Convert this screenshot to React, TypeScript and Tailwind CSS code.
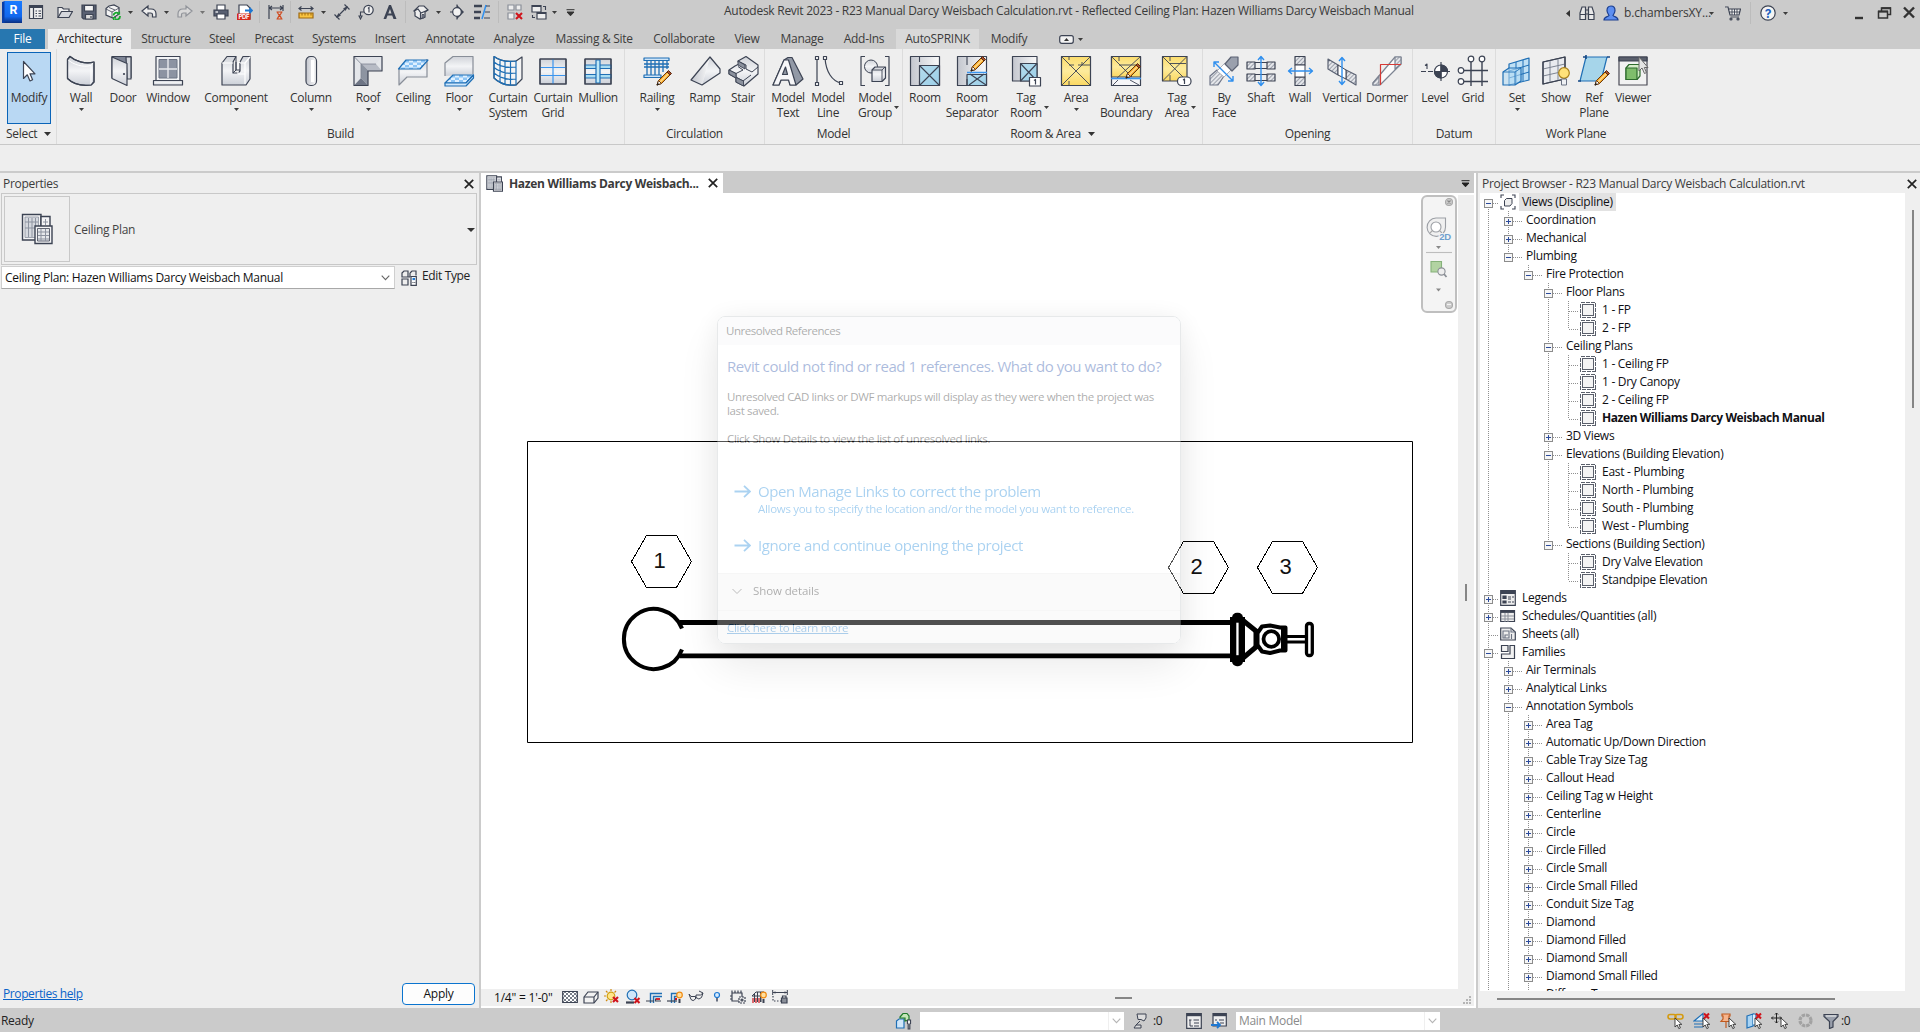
import React from "react";

type Kids = { children?: React.ReactNode };

/* ---------- drawing helpers ---------- */

const D = "#3c4353";
const B = "#1f6fb5";

function Ic({ s = 16, children }: Kids & { s?: number }) {
  return (
    <svg width={s} height={s} viewBox={`0 0 ${s} ${s}`} className="shrink-0" fill="none" stroke={D} strokeWidth="1.2">
      {children}
    </svg>
  );
}

const Big = ({ children }: Kids) => (
  <svg width="32" height="32" viewBox="0 0 32 32" className="shrink-0" fill="url(#metal)" stroke={D} strokeWidth="1.2" strokeLinejoin="round">
    {children}
  </svg>
);

function Defs() {
  return (
    <svg width="0" height="0" className="absolute">
      <defs>
        <linearGradient id="metal" x1="0" y1="0" x2="0" y2="1">
          <stop offset="0" stopColor="#d0d3d9" />
          <stop offset="0.5" stopColor="#f3f4f6" />
          <stop offset="1" stopColor="#ccd0d8" />
        </linearGradient>
        <linearGradient id="side" x1="0" y1="0" x2="1" y2="0">
          <stop offset="0" stopColor="#c3c6ce" />
          <stop offset="1" stopColor="#fafafa" />
        </linearGradient>
        <linearGradient id="yellow" x1="0" y1="0" x2="0" y2="1">
          <stop offset="0" stopColor="#fbdc6c" />
          <stop offset="0.5" stopColor="#fdeb9c" />
          <stop offset="1" stopColor="#fbd862" />
        </linearGradient>
        <linearGradient id="logo" x1="0" y1="0" x2="0" y2="1">
          <stop offset="0" stopColor="#1a7bff" />
          <stop offset="0.7" stopColor="#1268ee" />
          <stop offset="1" stopColor="#0a2f80" />
        </linearGradient>
        <linearGradient id="sky" x1="0" y1="0" x2="1" y2="1">
          <stop offset="0" stopColor="#b4dcee" />
          <stop offset="1" stopColor="#9ccfe8" />
        </linearGradient>
        <pattern id="hatch" width="3" height="3" patternUnits="userSpaceOnUse" patternTransform="rotate(45)">
          <rect width="3" height="3" fill="#e4e6ea" stroke="none" />
          <path d="M0 0V3" stroke="#8a909c" strokeWidth="1.6" />
        </pattern>
        <pattern id="tiles" width="8" height="5" patternUnits="userSpaceOnUse">
          <rect width="8" height="5" fill="#dff0ff" stroke="none" />
          <rect width="4" height="2.5" fill="#8cc4f5" stroke="none" />
          <rect x="4" y="2.5" width="4" height="2.5" fill="#8cc4f5" stroke="none" />
        </pattern>
        <pattern id="dots" width="4" height="4" patternUnits="userSpaceOnUse">
          <rect width="4" height="4" fill="#fff" stroke="none" />
          <rect width="2" height="2" fill="#777d88" stroke="none" />
          <rect x="2" y="2" width="2" height="2" fill="#777d88" stroke="none" />
        </pattern>
      </defs>
    </svg>
  );
}

const Pencil = ({ x = 0, y = 0 }: { x?: number; y?: number }) => (
  <g transform={`translate(${x} ${y})`} strokeWidth="1">
    <path d="M1 15L2.500 10.500L11 2L14 5L5.500 13.500Z" fill="#f5a623" stroke="#6b3a10" />
    <path d="M4 12L12.500 3.500" stroke="#ffd98a" strokeWidth="1.600" />
    <path d="M11 2L12.500 0.500L15.500 3.500L14 5Z" fill="#a8502a" stroke="#5a2810" />
    <path d="M1 15L2.500 10.500L5.500 13.500Z" fill="#fff" stroke="#6b3a10" />
    <path d="M0.600 15.400L1.600 12.600L3.400 14.400Z" fill="#222" stroke="none" />
  </g>
);

const Cursor = ({ x = 0, y = 0 }: { x?: number; y?: number }) => (
  <path transform={`translate(${x} ${y})`} d="M0 0V9L2.200 7L3.800 10.600L5.400 9.900L3.900 6.400H6.800Z" fill="#fff" stroke="#333" strokeWidth="0.900" />
);

const RedX = ({ x = 0, y = 0, s = 6 }: { x?: number; y?: number; s?: number }) => (
  <path d={`M${x} ${y}l${s} ${s}M${x + s} ${y}l${-s} ${s}`} stroke="#d0141c" strokeWidth="2.1" />
);

function Caret({ className = "" }: { className?: string }) {
  return (
    <svg width="5" height="3" viewBox="0 0 5 3" className={`shrink-0 ${className}`}>
      <path d="M0 0H5L2.500 3Z" fill="#3c3c3c" />
    </svg>
  );
}

/* ---------- ribbon icons ---------- */

const I = {
  cursor: (
    <Big>
      <path d="M10.500 5.500V22.500L14.300 18.800L17 25L19.600 23.800L17 17.800H22Z" fill="#fff" strokeWidth="1.200" />
    </Big>
  ),
  wall: (
    <Big>
      <path d="M2.500 4.500L5 1.500C10 6 20 9.500 29 7V27L26 30C17 31 8 29 2.500 23.500Z" />
      <path d="M2.500 4.500C9 10 18 12.500 26 10.500V30M26 10.500L29 7" stroke="#fff" strokeWidth="1" fill="none" />
      <path d="M2.500 4.500L5 1.500C10 6 20 9.500 29 7V27L26 30C17 31 8 29 2.500 23.500Z" fill="none" />
    </Big>
  ),
  door: (
    <Big>
      <path d="M5 23V1.500H24V23" fill="#7e8595" />
      <path d="M19 2H24V24H20Z" fill="#d5d8de" />
      <path d="M5 2L20 8.500V30.500L5 23.500Z" />
      <circle cx="17" cy="19" r="1.100" fill={D} stroke="none" />
    </Big>
  ),
  window: (
    <Big>
      <path d="M4 1.500H28V26H4Z" fill="#f3f4f6" />
      <path d="M7 4.500H25V23H7Z" fill="#8c93a2" stroke="#6d7484" strokeWidth="1" />
      <path d="M16 4V23M7 14H25" stroke="#e8eaee" strokeWidth="1.400" />
      <path d="M1.500 25.500H30.500V30H1.500Z" />
    </Big>
  ),
  component: (
    <Big>
      <path d="M2 8L7 1.500H16L13 8V18H17V30H2Z" stroke="none" />
      <path d="M2 30V8L7 1.500H16L13 7V18H18L20 16V7L23 1.500H30V24L26 30Z" />
      <path d="M2 8H13M18 19V8L20 7M18 19H25M25 8V29M20 8H25L30 2" stroke="#fff" strokeWidth="1.200" fill="none" />
      <path d="M16 1.500V15M13 18L16 15H20M16 15V7" fill="none" strokeWidth="1" />
    </Big>
  ),
  column: (
    <Big>
      <rect x="11" y="1.500" width="10.500" height="29" rx="4.500" fill="url(#side)" />
      <path d="M17.500 5V27" stroke="#fff" strokeWidth="3" />
    </Big>
  ),
  roof: (
    <Big>
      <path d="M2 1.500H30V16H16V30.500H2Z" fill="#e4e6ea" stroke="none" />
      <path d="M2 1.500L9 9H24L30 1.500Z" fill="#dfe1e6" stroke="none" />
      <path d="M9 9L16 16V30.500L9 23Z" fill="#8d94a1" stroke="none" />
      <path d="M9 9L16 16H30L24 9Z" fill="#b7bbc5" stroke="none" />
      <path d="M2 30.500L9 23L16 30.500Z" fill="#6e7585" stroke="none" />
      <path d="M2 1.500L16 16M9 9H24M9 9V23" fill="none" stroke="#7d8492" strokeWidth="0.800" />
      <path d="M2 1.500H30V16H16V30.500H2Z" fill="none" />
    </Big>
  ),
  ceiling: (
    <Big>
      <path d="M2 14V30L10 22H30V4" stroke="#888e98" />
      <path d="M9 5H31L23 14H1.500Z" fill="url(#tiles)" stroke={B} />
    </Big>
  ),
  floor: (
    <Big>
      <path d="M2 21V8L10 1.500H30V19" stroke="#888e98" />
      <path d="M10 20H30.500L23 28H2Z" fill="url(#tiles)" stroke={B} />
      <path d="M2 28H23L30.500 20V23L23 31H2Z" fill="#cfe7fb" stroke={B} />
    </Big>
  ),
  curtainSystem: (
    <Big>
      <path d="M2 1.500C8 6 16 7 24 6L30 2V24L24 30C15 31 8 29 2 23Z" fill="#f5f5f5" />
      <path d="M2 1.500C8 6 16 7 24 6V30C15 31 8 29 2 23ZM8 4.500V28M13 6V30M18.500 6.500V30M2 7C8 12 16 13 24 12M2 12.500C8 17.500 16 19 24 18M2 18C8 23 16 25 24 24" fill="none" stroke={B} />
    </Big>
  ),
  curtainGrid: (
    <Big>
      <path d="M3 4H29V29H3Z" />
      <path d="M16 4V29M3 12.500H29M3 20.500H29" stroke="#3b95ee" />
      <path d="M3 4H29V29H3Z" fill="none" />
    </Big>
  ),
  mullion: (
    <Big>
      <path d="M3 4H29V29H3Z" />
      <path d="M3 10H29V13.500H3ZM3 19.500H29V23H3Z" fill="#a9dcf2" stroke={B} />
      <path d="M14 5H18V28H14Z" fill="#bfe8f7" stroke={B} />
      <path d="M3 4H29V29H3Z" fill="none" />
    </Big>
  ),
  railing: (
    <Big>
      <path d="M3 3H28V5.500H3ZM3 20H20V22.500H3Z" fill="#cfe5f8" stroke={B} />
      <path d="M6 6V20M10 6V20M14 6V20M18 6V20M22 6V17M26 6V14M3 9H28M3 12H28" fill="none" stroke={B} strokeWidth="1.300" />
      <Pencil x={15} y={15} />
    </Big>
  ),
  ramp: (
    <Big>
      <path d="M2 25L21 2L31 14V18L13 30Z" fill="#fafafa" stroke="none" />
      <path d="M2 25L21 2L13 30Z" fill="url(#side)" stroke="none" />
      <path d="M21 2L31 14V18L13 30Z" stroke="none" />
      <path d="M2 25L21 2L31 14V18L13 30Z" fill="none" />
    </Big>
  ),
  stair: (
    <Big>
      <path d="M2 15L8 11L12 9L11 6L19 1.500L31 10V19L17 31L9 27V23L2 19Z" />
      <path d="M2 15L9 18.500L16 15L11 11.500M9 18.500V22L16 26L24 20M11 6L19 10V14L25 17L31 12" fill="none" strokeWidth="1" />
      <path d="M2 15L9 18.500V22.500L16.500 26V31L9 27V23L2 19ZM11 6L18 10V14L11 10Z" fill="#8b919d" strokeWidth="0.900" />
    </Big>
  ),
  modelText: (
    <Big>
      <path d="M1 30L12 5L16 2.500H20L31 24L24 30H18L17 25H9L7 30Z" fill="#9299a6" />
      <path d="M1 30L12 5H16.500L24 30H18L16.500 25H9L7 30Z" fill="#f6f6f8" />
      <path d="M10.500 19.500L13.500 12L15.500 19.500Z" fill="#8e95a2" />
    </Big>
  ),
  modelLine: (
    <Big>
      <path d="M5 3V29M13 3C14 17 20 26 29 28" fill="none" />
      <path d="M3.500 1.500H6.500V4.500H3.500ZM3.500 27.500H6.500V30.500H3.500ZM11.500 1.500H14.500V4.500H11.500ZM27.500 26.500H30.500V29.500H27.500Z" fill="#fff" strokeWidth="1.200" />
    </Big>
  ),
  modelGroup: (
    <Big>
      <path d="M6 1.500H2V30.500H6M26 1.500H30V30.500H26" fill="none" />
      <circle cx="12" cy="11.500" r="6.500" strokeWidth="1" />
      <path d="M13 15L16 12H26.500V23L23 26.500H13Z" />
      <path d="M13 15H23V26M23 15L26 12" fill="none" strokeWidth="0.900" />
    </Big>
  ),
  room: (
    <Big>
      <path d="M1.500 1.500H30.500V30.500H1.500Z" fill="url(#side)" />
      <path d="M10.500 10.500H30.500V30.500H10.500Z" fill="url(#sky)" />
      <path d="M10.500 10.500L30.500 30.500M30.500 10.500L10.500 30.500M10.500 2V7M10.500 26V30" fill="none" strokeWidth="1.100" />
    </Big>
  ),
  roomSep: (
    <Big>
      <path d="M1.500 1.500H30.500V30.500H1.500Z" fill="url(#side)" />
      <path d="M11 19.500H30.500V30.500H11Z" fill="url(#sky)" />
      <path d="M11 2V10M11 24V30M13 30L28 19M14 19L30 30" fill="none" strokeWidth="1.100" />
      <path d="M11 17.500H31" stroke="#3b95ee" strokeWidth="1.500" />
      <Pencil x={14} y={1} />
    </Big>
  ),
  tagRoom: (
    <Big>
      <path d="M2.500 1.500H27V26H2.500Z" fill="url(#side)" />
      <path d="M10.500 8.500H27V26H10.500Z" fill="url(#sky)" />
      <path d="M10.500 8.500L27 26M27 8.500L10.500 26" strokeWidth="1.100" />
      <path d="M19.500 22.500H30.500V31H19.500Z" fill="#fff" />
      <path d="M24 25.500L25.500 24.500V29.500" fill="none" />
    </Big>
  ),
  area: (
    <Big>
      <path d="M1.500 1.500H30.500V30.500H1.500Z" fill="url(#yellow)" />
      <path d="M1.500 1.500L30.500 30.500M30.500 1.500L1.500 30.500M9 2V5M9 10H14M18 10H30M9 26V30M22 10V7" fill="none" strokeWidth="0.900" />
    </Big>
  ),
  areaBoundary: (
    <Big>
      <path d="M1.500 1.500H30.500V30.500H1.500Z" fill="#f6f6f8" />
      <path d="M1.500 1.500H30.500V22H1.500Z" fill="url(#yellow)" />
      <path d="M1.500 1.500L22 22M30.500 1.500L6 24M9 2V6M9 10H28M3 30L8 25M20 25L29 30" fill="none" strokeWidth="0.900" />
      <path d="M1 23.500H31" stroke="#3b95ee" strokeWidth="1.600" />
      <Pencil x={15} y={8} />
    </Big>
  ),
  tagArea: (
    <Big>
      <path d="M1.500 1.500H26V26H1.500Z" fill="url(#yellow)" />
      <path d="M1.500 1.500L26 26M26 1.500L1.500 26M9 2V6M9 8.500H25M9 20V26" fill="none" strokeWidth="0.900" />
      <rect x="16.500" y="22" width="13.500" height="8.500" rx="4" fill="#fff" />
      <path d="M22 25L23.500 24V29" fill="none" />
    </Big>
  ),
  byFace: (
    <Big>
      <path d="M2 21L9 15L16 21L10 30H2Z" fill="url(#hatch)" stroke="#71788a" />
      <path d="M9 16L17 8L24 14L16 22Z" fill="#fff" strokeWidth="0.800" stroke="#9aa0ab" />
      <path d="M17 9L23 2H30V10L24 16Z" fill="#9aa0ad" stroke="#5c6374" />
      <path d="M6 7L25 26M6 12V7H11M25 21V26H20" fill="none" stroke="#2f8fee" strokeWidth="1.400" />
    </Big>
  ),
  shaft: (
    <Big>
      <path d="M2 7H10V14H2ZM22 7H30V14H22ZM2 19H10V26H2ZM22 19H30V26H22Z" fill="url(#hatch)" strokeWidth="1.200" />
      <path d="M10 7.500H22M10 13.500H22M10 19.500H22M10 25.500H22" strokeWidth="1" />
      <path d="M16 2V30M13 5L16 1.500L19 5M13 27L16 30.500L19 27" fill="none" stroke="#2f8fee" strokeWidth="1.400" />
    </Big>
  ),
  wallOpen: (
    <Big>
      <path d="M11 1.500H21V10H11ZM11 22H21V30.500H11Z" fill="url(#hatch)" />
      <path d="M11 10H21V22H11Z" fill="#fff" strokeWidth="1" />
      <path d="M5 16H28M8 13L4.500 16L8 19M25 13L28.500 16L25 19" fill="none" stroke="#2f8fee" strokeWidth="1.400" />
    </Big>
  ),
  vertical: (
    <Big>
      <path d="M2 4L12 10V20L2 14ZM20 15L30 20V30L20 24Z" fill="url(#hatch)" stroke="#5c6374" />
      <path d="M12 10L20 15V24L12 20Z" fill="#fff" strokeWidth="1" />
      <path d="M16 3V29M13 6L16 2.500L19 6M13 26L16 29.500L19 26" fill="none" stroke="#2f8fee" strokeWidth="1.400" />
    </Big>
  ),
  dormer: (
    <Big>
      <path d="M2 28L24 2H30V9L9 30H2Z" fill="#fafafa" stroke="#7d8492" />
      <path d="M2 28L8 21V30H2ZM24 2H30V9L24 14Z" fill="url(#hatch)" stroke="#7d8492" />
      <path d="M9.500 30V9.500H30" fill="none" stroke="#d63a35" />
    </Big>
  ),
  level: (
    <Big>
      <path d="M2 16.500H7M9 16.500H14M29 16.500H31" />
      <path d="M6 10.500L8 9V14" fill="none" strokeWidth="1.100" />
      <circle cx="22" cy="16.500" r="6.500" fill="#fff" />
      <path d="M22 10A6.500 6.500 0 0 1 28.500 16.500H22ZM22 23A6.500 6.500 0 0 1 15.500 16.500H22Z" fill={D} />
      <path d="M22 7V26" />
    </Big>
  ),
  grid: (
    <Big>
      <path d="M14 7V31M25 7V31M7 15.500H31M7 26.500H31" strokeWidth="1.400" />
      <circle cx="14" cy="4" r="2.800" fill="#fff" />
      <circle cx="25" cy="4" r="2.800" fill="#fff" />
      <circle cx="4" cy="15.500" r="2.800" fill="#fff" />
      <circle cx="4" cy="26.500" r="2.800" fill="#fff" />
    </Big>
  ),
  set: (
    <Big>
      <path d="M8 9L28 3V25L8 30Z" fill="#bfe0f5" stroke={B} />
      <path d="M15 7V28M22 5V26M8 16L28 10M8 23L28 17" stroke={B} strokeWidth="1" />
      <path d="M2 17L8 13H20V26L14 30H2Z" fill="#b8dcf4" fillOpacity="0.600" stroke={B} />
      <path d="M2 17H14V30M14 17L20 13" stroke={B} fill="none" strokeWidth="0.900" />
    </Big>
  ),
  show: (
    <Big>
      <path d="M3 7L25 2V24L3 29Z" fill="#e9ebef" />
      <path d="M10 5.500V27M18 4V25M3 14L25 9M3 21L25 16" stroke="#7d8492" strokeWidth="1" />
      <path d="M3 7L25 2V24L3 29Z" fill="none" />
      <circle cx="24" cy="18" r="5.300" fill="#ffe27a" stroke="#a9801a" />
      <path d="M21.500 24H26.500V30H21.500Z" fill="#eef0f3" stroke="#6b7282" strokeWidth="1" />
    </Big>
  ),
  refPlane: (
    <Big>
      <path d="M8 2H29L23 26H2Z" fill="#a6d5ea" stroke={B} />
      <path d="M5 2H8M29 2H32M8 0L8 4M0 26H3" stroke="#174a86" strokeWidth="1.600" />
      <Pencil x={16} y={15} />
    </Big>
  ),
  viewer: (
    <Big>
      <path d="M2 2H30V30H2Z" fill="#f2f2f2" stroke="#4a4a55" />
      <path d="M2 2H30V6H2Z" fill="#5a5f6c" />
      <path d="M9 13L12 9.500H23V21L20 24.500H9Z" fill="#d5edc8" stroke="#2d6b2d" />
      <path d="M9 13H20V24.500H9Z" fill="#7fbd6c" stroke="#2d6b2d" />
      <path d="M22 2V16L25 13L27.500 18.500L29.500 17.500L27.300 12.500H31Z" fill="#e4e4e4" stroke="#666" strokeWidth="1" />
    </Big>
  ),
};

type Tool = { ml: string; icon: keyof typeof I; a: string; b?: string; arrow?: "below" | "side" };
type Group = { w: string; title: string; tools: Tool[]; more?: boolean };

const groups: Group[] = [
  {
    w: "w-[568px]",
    title: "Build",
    tools: [
      { ml: "ml-[6px]", icon: "wall", a: "Wall", arrow: "below" },
      { ml: "ml-[6px]", icon: "door", a: "Door" },
      { ml: "ml-[9px]", icon: "window", a: "Window" },
      { ml: "ml-[32px]", icon: "component", a: "Component", arrow: "below" },
      { ml: "ml-[39px]", icon: "column", a: "Column", arrow: "below" },
      { ml: "ml-[21px]", icon: "roof", a: "Roof", arrow: "below" },
      { ml: "ml-[9px]", icon: "ceiling", a: "Ceiling" },
      { ml: "ml-[10px]", icon: "floor", a: "Floor", arrow: "below" },
      { ml: "ml-[13px]", icon: "curtainSystem", a: "Curtain", b: "System" },
      { ml: "ml-[9px]", icon: "curtainGrid", a: "Curtain", b: "Grid" },
      { ml: "ml-[9px]", icon: "mullion", a: "Mullion" },
    ],
  },
  {
    w: "w-[140px]",
    title: "Circulation",
    tools: [
      { ml: "ml-[14px]", icon: "railing", a: "Railing", arrow: "below" },
      { ml: "ml-[12px]", icon: "ramp", a: "Ramp" },
      { ml: "ml-[2px]", icon: "stair", a: "Stair" },
    ],
  },
  {
    w: "w-[138px]",
    title: "Model",
    tools: [
      { ml: "ml-[5px]", icon: "modelText", a: "Model", b: "Text" },
      { ml: "ml-[4px]", icon: "modelLine", a: "Model", b: "Line" },
      { ml: "ml-[11px]", icon: "modelGroup", a: "Model", b: "Group", arrow: "side" },
    ],
  },
  {
    w: "w-[300px]",
    title: "Room & Area",
    more: true,
    tools: [
      { ml: "ml-[4px]", icon: "room", a: "Room" },
      { ml: "ml-[11px]", icon: "roomSep", a: "Room", b: "Separator" },
      { ml: "ml-[18px]", icon: "tagRoom", a: "Tag", b: "Room", arrow: "side" },
      { ml: "ml-[14px]", icon: "area", a: "Area", arrow: "below" },
      { ml: "ml-[14px]", icon: "areaBoundary", a: "Area", b: "Boundary" },
      { ml: "ml-[15px]", icon: "tagArea", a: "Tag", b: "Area", arrow: "side" },
    ],
  },
  {
    w: "w-[210px]",
    title: "Opening",
    tools: [
      { ml: "ml-[3px]", icon: "byFace", a: "By", b: "Face" },
      { ml: "ml-[1px]", icon: "shaft", a: "Shaft" },
      { ml: "ml-[3px]", icon: "wallOpen", a: "Wall" },
      { ml: "ml-[6px]", icon: "vertical", a: "Vertical" },
      { ml: "ml-[9px]", icon: "dormer", a: "Dormer" },
    ],
  },
  {
    w: "w-[83px]",
    title: "Datum",
    tools: [
      { ml: "ml-[4px]", icon: "level", a: "Level" },
      { ml: "ml-[2px]", icon: "grid", a: "Grid" },
    ],
  },
  {
    w: "w-[160px]",
    title: "Work Plane",
    tools: [
      { ml: "ml-[3px]", icon: "set", a: "Set", arrow: "below" },
      { ml: "ml-[3px]", icon: "show", a: "Show" },
      { ml: "ml-[2px]", icon: "refPlane", a: "Ref", b: "Plane" },
      { ml: "ml-[3px]", icon: "viewer", a: "Viewer" },
    ],
  },
];

function Ribbon() {
  return (
    <div className="flex h-[96px] shrink-0 border-b border-[#c8c8c8] bg-[#eeeeee] text-[#333]">
      <div className="flex w-[57px] flex-col border-r border-[#dcdcdc] pt-[3px]">
        <div className="ml-[7px] flex h-[72px] w-[44px] flex-col items-center border border-[#0a64b8] bg-[#b9d8f3] pt-[3px]">
          {I.cursor}
          <span className="mt-[2px] leading-[15px]">Modify</span>
        </div>
        <div className="ml-[6px] mt-[1px] flex items-center gap-[7px] leading-[18px]">
          Select
          <svg width="7" height="4" viewBox="0 0 7 4"><path d="M0 0H7L3.500 4Z" fill="#333" /></svg>
        </div>
      </div>
      {groups.map((g, i) => (
        <div key={g.title} className={`flex shrink-0 flex-col ${g.w} ${i < groups.length - 1 ? "border-r border-[#dcdcdc]" : ""}`}>
          <div className="flex h-[76px] pt-[6px]">
            {g.tools.map((t, j) => (
              <div key={j} className={`flex w-9 shrink-0 flex-col items-center whitespace-nowrap ${t.ml}`}>
                {I[t.icon]}
                <span className="mt-[3px] leading-[15px]">{t.a}</span>
                {t.b && (
                  <span className="relative leading-[15px]">
                    {t.b}
                    {t.arrow === "side" && <Caret className="absolute -right-[7px] top-[1px]" />}
                  </span>
                )}
                {t.arrow === "below" && <Caret className="mt-[3px]" />}
              </div>
            ))}
          </div>
          <div className="flex items-center justify-center gap-[7px] leading-[18px]">
            {g.title}
            {g.more && <svg width="7" height="4" viewBox="0 0 7 4"><path d="M0 0H7L3.500 4Z" fill="#333" /></svg>}
          </div>
        </div>
      ))}
    </div>
  );
}

/* ---------- title bar and quick access tools ---------- */

const Sep = ({ className = "" }: { className?: string }) => <div className={`h-[22px] w-px shrink-0 bg-[#bcbcbc] ${className}`} />;

function QuickAccess() {
  return (
    <div className="flex h-[24px] items-center">
      <svg width="20" height="24" viewBox="0 0 20 24" className="ml-[2px] shrink-0">
        <path d="M0 2L3 1V23H0Z" fill="#0a3fa8" />
        <rect x="2.500" y="1" width="17.500" height="22" fill="url(#logo)" />
        <text x="11.200" y="14" fontSize="12" fontWeight="700" textAnchor="middle" fill="#fff" fontFamily="Inter, sans-serif">R</text>
      </svg>
      <div className="ml-[6px]"><Ic>
        <path d="M1.500 1.500H14.500V14.500H1.500Z" fill="#eee" /><path d="M1.500 2.500H14.500" strokeWidth="3" /><path d="M5.500 4V14M7.500 7H9M10.500 7H13M7.500 9.500H9M10.500 9.500H13M7.500 12H9M10.500 12H13" />
      </Ic></div>
      <div className="ml-[13px]"><Ic>
        <path d="M1 13.500V3.500H5L6.500 5H12V7.500" fill="#eee" /><path d="M1 13.500L4.500 7.500H15.500L12 13.500Z" fill="#d5d7dc" />
      </Ic></div>
      <div className="ml-[8px]"><Ic>
        <path d="M1 1H15V15H2.500L1 13.500Z" fill="#596072" /><path d="M3.500 1.500H12.500V7H3.500Z" fill="#f4f4f4" /><path d="M4.500 10.500H12V15H4.500Z" fill="#ddd" /><path d="M10 12V14" />
      </Ic></div>
      <div className="ml-[8px]"><Ic>
        <path d="M1 4.500L4 2L9 1L14 3.500V10L8 14L1 11Z" fill="#f4f4f4" /><path d="M1 5L7 8V13.500M7 8L14 4M4 3.500L10 6" strokeWidth="0.800" />
        <path d="M8.500 11.500A3 3 0 0 1 13.500 9.500M15 12A3.200 3.200 0 0 1 9.500 14.500" stroke="#18a82e" strokeWidth="1.800" /><path d="M12 10L14.500 10V7.500M11 13.500H8.500V16" stroke="#18a82e" />
      </Ic></div>
      <Caret className="ml-[7px]" />
      <div className="ml-[8px]"><Ic>
        <path d="M1 7L7 2V5H10Q15 5 15 10V13H11.500V10.500Q11.500 9 9.500 9H7V12Z" fill="#eee" />
      </Ic></div>
      <Caret className="ml-[7px]" />
      <div className="ml-[8px] opacity-40"><Ic>
        <path d="M15 7L9 2V5H6Q1 5 1 10V13H4.500V10.500Q4.500 9 6.500 9H9V12Z" fill="#eee" />
      </Ic></div>
      <Caret className="ml-[7px] opacity-60" />
      <div className="ml-[8px]"><Ic>
        <path d="M4 6V1H12V6" fill="#fff" /><path d="M1 6H15V12H1Z" fill="#596072" /><path d="M4 10H12V15H4Z" fill="#fff" /><path d="M2.500 8H5" stroke="#fff" />
      </Ic></div>
      <div className="ml-[8px]"><Ic>
        <path d="M2 15V1H10L13 4V15Z" fill="#fff" /><path d="M8 6.500H15M12.500 4L15 6.500L12.500 9" stroke="#1e78d2" strokeWidth="1.800" />
        <path d="M0 9.500H13.500V16H0Z" fill="#d5281b" stroke="none" /><text x="6.800" y="15" fontSize="6" fontWeight="700" textAnchor="middle" fill="#fff" stroke="none" fontFamily="Inter, sans-serif">PDF</text>
      </Ic></div>
      <Sep className="ml-[6px]" />
      <div className="ml-[8px]"><Ic>
        <path d="M1 1V15M15 1V7M1 4H15M4 2L1.500 4L4 6M12 2L14.500 4L12 6" /><path d="M8.500 8H14.500M8.500 15H14.500M9.500 8C9.500 11 13.500 12 13.500 15M13.500 8C13.500 11 9.500 12 9.500 15" stroke="#d0481c" />
      </Ic></div>
      <Sep className="ml-[6px]" />
      <div className="ml-[7px]"><Ic>
        <path d="M1 4.500H15M3.500 2.500L1 4.500L3.500 6.500M12.500 2.500L15 4.500L12.500 6.500" /><path d="M1 9H15V14H1Z" fill="#f9c440" stroke="#a06a10" /><path d="M4 9V11.500M7 9V11.500M10 9V11.500M13 9V11.500" stroke="#a06a10" strokeWidth="1" />
      </Ic></div>
      <Caret className="ml-[7px]" />
      <div className="ml-[8px]"><Ic>
        <path d="M3 13L13 3M0.500 10.500L5.500 15.500M10.500 0.500L15.500 5.500" /><path d="M6.500 11.500L2.500 13.500L4.500 9.500ZM9.500 4.500L13.500 2.500L11.500 6.500Z" fill={D} strokeWidth="0.500" />
      </Ic></div>
      <div className="ml-[8px]"><Ic>
        <circle cx="10.500" cy="6" r="4.700" fill="#eee" /><path d="M10 4.500L11 3.500V8.500M6 8H2.500V12M1 12L2.500 15L4 12Z" strokeWidth="1.100" />
      </Ic></div>
      <div className="ml-[8px]"><Ic>
        <path d="M1.500 15L7 1H9L14.500 15H11.500L10.200 11.500H5.500L4.200 15Z" fill={D} stroke="none" /><path d="M6.300 9.500H9.500L8 5Z" fill="#cbcbcb" stroke="none" />
      </Ic></div>
      <Sep className="ml-[7px]" />
      <div className="ml-[7px]"><Ic>
        <path d="M1 7L6 2H11L15 6L12 8V13L7 15L2 12V8Z" fill="#eee" /><path d="M1 7L5 5L8 9L15 6M7.500 9V15" /><path d="M9 10.500H11V14H9Z" fill="#8a909d" strokeWidth="0.800" />
      </Ic></div>
      <Caret className="ml-[7px]" />
      <div className="ml-[8px]"><Ic>
        <path d="M8 1L15 8L8 15Z" fill={D} stroke="none" /><circle cx="8" cy="8" r="4.300" fill="#f2f2f2" /><path d="M8 0.500V3.500M8 12.500V15.500M1 8H4" />
      </Ic></div>
      <div className="ml-[9px]"><Ic>
        <path d="M0 2H8M0 8H7M0 14H6" strokeWidth="2.600" /><path d="M8 15L12 1" stroke="#2f8fee" strokeWidth="1.500" /><path d="M12 2H16M11 8H16M10 14H16" strokeWidth="1" />
      </Ic></div>
      <Sep className="ml-[8px]" />
      <div className="ml-[8px]"><Ic>
        <path d="M1 1H7V6H1ZM9 1H14V6H9ZM1 9H7V15H1Z" fill="#eee" stroke="#8a8f99" /><RedX x={9} y={9} s={6} />
      </Ic></div>
      <div className="ml-[8px]"><Ic>
        <path d="M1 1.500H10V8H1Z" fill="#eee" /><path d="M6 8.500H15V15H6Z" fill="#eee" /><path d="M1 2H10M6 9H15" strokeWidth="2" /><path d="M12 2.500H14.500V6M1.500 11V13.500H4" strokeWidth="1.100" />
      </Ic></div>
      <Caret className="ml-[5px]" />
      <svg width="9" height="7" viewBox="0 0 9 7" className="ml-[9px]"><path d="M0.500 0.700H8.500M1 3H8L4.500 6.800Z" fill="#333" stroke="#333" strokeWidth="1" /></svg>
    </div>
  );
}

function TitleBar() {
  return (
    <div className="flex h-[29px] shrink-0 items-start bg-[#cbcbcb] text-[#3a3a3a]">
      <div className="w-[724px] shrink-0"><QuickAccess /></div>
      <div className="w-[841px] shrink-0 whitespace-nowrap leading-[21px] tracking-[-0.268px]">
        Autodesk Revit 2023 - R23 Manual Darcy Weisbach Calculation.rvt - Reflected Ceiling Plan: Hazen Williams Darcy Weisbach Manual
      </div>
      <div className="flex h-[26px] flex-1 items-center">
        <svg width="5" height="7" viewBox="0 0 5 7"><path d="M5 0V7L1 3.500Z" fill="#333" /></svg>
        <div className="ml-[9px]"><Ic>
          <path d="M1 8L3 2H6.500V14.500H1ZM9.500 2H13L15 8V14.500H9.500Z" fill="#e8e8e8" /><path d="M6.500 5H9.500M6.500 9H9.500M1 9.500H6.500M9.500 9.500H15" />
        </Ic></div>
        <div className="ml-[8px]"><Ic>
          <path d="M8 1C11 1 12 3 12 5.500C12 8 10.500 9 10 10.500C11 12 15 11.500 15 15H1C1 11.500 5 12 6 10.500C5.500 9 4 8 4 5.500C4 3 5 1 8 1Z" fill="#5d8ef0" stroke="#1c3f8f" />
        </Ic></div>
        <span className="ml-[5px] w-[85px] tracking-[-0.15px]">b.chambersXY...</span>
        <Caret />
        <div className="ml-[11px]"><Ic>
          <path d="M0 2H3L5 10H14L15.500 4H4" fill="#f2f2f2" /><path d="M5.500 12H14M7 4V10M9.500 4V10M12 4V10M4.500 7H15" strokeWidth="0.900" /><circle cx="6" cy="14" r="1" /><circle cx="13" cy="14" r="1" />
        </Ic></div>
        <Sep className="ml-[9px]" />
        <div className="ml-[9px]"><Ic>
          <circle cx="8" cy="8" r="7.200" fill="#f4f4f4" /><text x="8" y="12.500" fontSize="12" fontWeight="700" textAnchor="middle" fill="#1e5fc0" stroke="none" fontFamily="Inter, sans-serif">?</text>
        </Ic></div>
        <Caret className="ml-[7px]" />
        <svg width="62" height="14" viewBox="0 0 62 14" className="ml-[66px]" fill="none" stroke="#333" strokeWidth="1.500">
          <path d="M1 12H9" strokeWidth="2.400" />
          <path d="M27.500 5V2H36.500V8.500H33.500" /><path d="M24.500 5.500H33.500V12H24.500Z" /><path d="M24 5.500H34M27.500 2.200H37" strokeWidth="2" />
          <path d="M50 1.500L60 11.500M60 1.500L50 11.500" strokeWidth="2.400" />
        </svg>
      </div>
    </div>
  );
}

const tabs: [string, string][] = [
  ["Structure", "ml-[19px] w-8"],
  ["Steel", "ml-[24px] w-8"],
  ["Precast", "ml-[20px] w-8"],
  ["Systems", "ml-[28px] w-8"],
  ["Insert", "ml-[24px] w-8"],
  ["Annotate", "ml-[28px] w-8"],
  ["Analyze", "ml-[32px] w-8"],
  ["Massing & Site", "ml-[48px] w-8"],
  ["Collaborate", "ml-[58px] w-8"],
  ["View", "ml-[31px] w-8"],
  ["Manage", "ml-[23px] w-8"],
  ["Add-Ins", "ml-[30px] w-8"],
  ["AutoSPRINK", "ml-[16px] w-[83px] bg-[#d9d9d9]"],
  ["Modify", "ml-[14px] w-8"],
];

function Tabs() {
  return (
    <div className="flex h-[20px] shrink-0 bg-[#cbcbcb] leading-[20px] text-[#3c3c3c]">
      <div className="flex w-[45px] justify-center bg-[#2777b0] text-white">File</div>
      <div className="ml-[3px] flex w-[83px] justify-center bg-[#eeeeee] text-[#222]">Architecture</div>
      {tabs.map(([t, c]) => (
        <div key={t} className={`flex shrink-0 justify-center whitespace-nowrap ${c}`}>{t}</div>
      ))}
      <div className="ml-[34px] flex items-center gap-[4px]">
        <svg width="15" height="9" viewBox="0 0 15 9"><rect x="0.700" y="0.700" width="13.600" height="7.600" rx="2" fill="#f2f2f2" stroke={D} strokeWidth="1.200" /><path d="M5 6L7.500 3L10 6Z" fill="#333" /></svg>
        <Caret />
      </div>
    </div>
  );
}

/* ---------- properties palette ---------- */

const Cross = () => (
  <svg width="10" height="10" viewBox="0 0 10 10"><path d="M0.800 0.800L9.200 9.200M9.200 0.800L0.800 9.200" stroke="#222" strokeWidth="1.700" /></svg>
);

const Chevron = ({ color = "#666" }: { color?: string }) => (
  <svg width="9" height="6" viewBox="0 0 9 6"><path d="M0.700 0.700L4.500 4.700L8.300 0.700" fill="none" stroke={color} strokeWidth="1.100" /></svg>
);

function PlanIcon({ s }: { s: number }) {
  return (
    <svg width={s} height={s} viewBox="0 0 32 32" fill="#f4f4f6" stroke={D} strokeWidth={s > 20 ? 1.4 : 2}>
      <path d="M1.500 1.500H20V27H1.500Z" /><path d="M4 4H17.500V24.500H4Z" fill="#d6d9df" stroke="#8d93a0" strokeWidth="0.800" />
      <path d="M20 3.500H29V14H20Z" />
      <path d="M7.500 5V24M11 5V24M14.500 5V13M4 9H17M4 15H14M22 9H27M24.500 6V12" stroke="#8d93a0" strokeWidth="1" />
      <path d="M14 13H31V30.500H14Z" /><path d="M16.500 15.500H28.500V28H16.500Z" fill="#e6e8ec" strokeWidth="0.800" />
      <path d="M20 16V28M24.500 16V28M17 19H28M17 22.500H28M17 26H28" stroke="#8d93a0" strokeWidth="1" />
    </svg>
  );
}

function Properties() {
  return (
    <div className="flex w-[479px] shrink-0 flex-col bg-[#eeeeee]">
      <div className="flex h-[20px] items-center justify-between pl-[3px] pr-[5px] pt-[2px] text-[#3c3c3c]">
        <span>Properties</span>
        <Cross />
      </div>
      <div className="ml-px flex h-[72px] w-[476px] items-center border border-[#c8c8c8] bg-[#efefef] pl-[2px]">
        <div className="flex h-[66px] w-[66px] items-center justify-center border border-[#c8c8c8]"><PlanIcon s={32} /></div>
        <span className="ml-[4px] flex-1 pt-[2px] text-[#444]">Ceiling Plan</span>
        <svg width="8" height="4" viewBox="0 0 8 4" className="mr-[1px] mt-[2px]"><path d="M0 0H8L4 4Z" fill="#333" /></svg>
      </div>
      <div className="mt-px flex items-center">
        <div className="ml-px flex h-[23px] w-[394px] items-center justify-between border border-[#cfcfcf] border-b-[#a8a8a8] bg-white pl-[3px] pr-[4px] text-[#111]">
          Ceiling Plan: Hazen Williams Darcy Weisbach Manual
          <Chevron />
        </div>
        <div className="ml-[6px]">
          <Ic>
            <path d="M1 3L3 1H7V7H1ZM9 3L11 1H15V5.500M9 3V7M1 9H7V15H1ZM7 7H9" fill="#eee" /><path d="M10 6.500H15.300V15.300H10Z" fill="#fff" /><path d="M11.500 9H14" stroke="#1e78d2" strokeWidth="2.200" /><path d="M11.500 12.500H12.500M13.300 12.500H14.300" />
          </Ic>
        </div>
        <span className="ml-[5px] pb-[3px] tracking-[-0.35px] text-[#222]">Edit Type</span>
      </div>
      <div className="flex-1" />
      <div className="mb-[3px] flex items-center justify-between pl-[3px] pr-[4px]">
        <span className="pb-px tracking-[-0.4px] text-[#0a63c9] underline">Properties help</span>
        <div className="flex h-[22px] w-[73px] items-center justify-center rounded-[4px] border border-[#0a74cf] bg-[#fdfdfd] text-[#111]">Apply</div>
      </div>
    </div>
  );
}

/* ---------- drawing area ---------- */

function Hex({ x, y, n }: { x: number; y: number; n: string }) {
  return (
    <g>
      <path d={`M${x - 30} ${y}L${x - 15} ${y - 26}H${x + 15}L${x + 30} ${y}L${x + 15} ${y + 26}H${x - 15}Z`} fill="none" stroke="#000" strokeWidth="1" shapeRendering="crispEdges" />
      <text x={x - 2} y={y + 6.5} fontSize="22" textAnchor="middle" fill="#111" fontFamily="Liberation Sans, Arial, sans-serif">{n}</text>
    </g>
  );
}

function Drawing() {
  return (
    <svg width="977" height="796" viewBox="481 193 977 796" className="absolute left-0 top-0">
      <path d="M527.500 441.500H1412.500V742.500H527.500Z" fill="none" stroke="#000" strokeWidth="1" />
      <Hex x={661.5} y={561.5} n="1" />
      <Hex x={1198.5} y={567.5} n="2" />
      <Hex x={1287.5} y={567.5} n="3" />
      <path d="M682 628.500A30 30 0 1 0 682 649.500" fill="none" stroke="#000" strokeWidth="4" />
      <path d="M680 622.500H1232M680 655.800H1232" stroke="#000" strokeWidth="4.800" />
      <rect x="1230" y="617" width="15" height="45" />
      <rect x="1232" y="612.700" width="11" height="53.500" rx="5" />
      <rect x="1236.300" y="622.700" width="2.300" height="32.500" fill="#fff" />
      <path d="M1243 620.500L1256 631M1243 658L1256 647" stroke="#000" strokeWidth="5" />
      <rect x="1253.500" y="629" width="6" height="20" />
      <path d="M1262 626.500L1270 625.500L1280 627.500H1285.500V650.500H1280L1270 653L1262 651.500L1257.500 645V633Z" fill="#fff" stroke="#000" strokeWidth="4" strokeLinejoin="round" />
      <circle cx="1271.300" cy="639" r="7.800" fill="#fff" stroke="#000" strokeWidth="3.800" />
      <rect x="1281" y="627" width="5.800" height="24" />
      <path d="M1286 636.500H1306M1286 642H1306" stroke="#000" strokeWidth="2.800" />
      <rect x="1306.500" y="623.500" width="5.800" height="32" rx="2.500" fill="#fff" stroke="#000" strokeWidth="3.300" />
    </svg>
  );
}

const Arrow = () => (
  <svg width="17" height="13" viewBox="0 0 17 13" className="shrink-0"><path d="M0.500 6.500H16M10 0.800L16 6.500L10 12.200" fill="none" stroke="#0078d4" strokeWidth="1.800" /></svg>
);

function Dialog() {
  return (
    <div className="absolute left-[236px] top-[123px] h-[328px] w-[464px] rounded-[8px] opacity-[0.33] shadow-[0_22px_44px_rgba(0,0,0,0.26),0_0_24px_rgba(0,0,0,0.14)]">
      <div className="flex h-full flex-col overflow-hidden rounded-[8px] border border-[#b5bcc0] text-black">
        <div className="h-[28px] shrink-0 bg-[#f1f3f5] pl-[8px] text-[11.500px] leading-[28px] tracking-[-0.450px]">Unresolved References</div>
        <div className="flex h-[228px] shrink-0 flex-col whitespace-nowrap bg-white pl-[9px]">
          <div className="mt-[9px] text-[15px] leading-[24px] tracking-[-0.430px] text-[#003399]">
            Revit could not find or read 1 references. What do you want to do?
          </div>
          <div className="mt-[12px] text-[11.500px] leading-[14px] tracking-[-0.360px]">
            Unresolved CAD links or DWF markups will display as they were when the project was<br />last saved.<br /><br />Click Show Details to view the list of unresolved links.
          </div>
          <div className="mt-[34px] flex items-center gap-[7px] pl-[7px] text-[15px] leading-[22px] tracking-[-0.430px] text-[#0078d4]">
            <Arrow />Open Manage Links to correct the problem
          </div>
          <div className="pl-[31px] text-[11.500px] leading-[13px] tracking-[-0.300px] text-[#0078d4]">
            Allows you to specify the location and/or the model you want to reference.
          </div>
          <div className="mt-[19px] flex items-center gap-[7px] pl-[7px] text-[15px] leading-[22px] tracking-[-0.430px] text-[#0078d4]">
            <Arrow />Ignore and continue opening the project
          </div>
        </div>
        <div className="flex h-[38px] shrink-0 items-center gap-[10px] border-y border-[#e2e2e2] bg-[#f0f0f0] pb-[2px] pl-[13px] text-[11.500px] tracking-[-0.100px]">
          <svg width="12" height="7" viewBox="0 0 12 7" className="shrink-0"><path d="M1.500 1L6 5.500L10.500 1" fill="none" stroke="#333" strokeWidth="1" /></svg>
          Show details
        </div>
        <div className="flex-1 bg-[#f0f0f0] pl-[9px] text-[11.500px] leading-[33px] tracking-[-0.300px] text-[#0067c0] underline">Click here to learn more</div>
      </div>
    </div>
  );
}

function NavBar() {
  return (
    <div className="absolute left-[940px] top-[2px] flex h-[118px] w-[36px] flex-col items-center rounded-[6px] border-2 border-[#bfbfbf] bg-[#f4f4f4]">
      <svg width="32" height="114" viewBox="0 0 32 114" fill="none" stroke="#a9a9a9" strokeWidth="1.100">
        <circle cx="26" cy="5" r="3.500" fill="#ccc" /><path d="M24.500 3.500L27.500 6.500M27.500 3.500L24.500 6.500" stroke="#888" />
        <path d="M13 21H22.500V30A9.200 9.200 0 1 1 13 21Z" fill="#f0f0f0" stroke="#9c9fa5" /><circle cx="13" cy="30" r="5" fill="#fff" stroke="#9c9fa5" /><path d="M7 36L9.500 33.500M19 36L16.500 33.500" />
        <text x="22" y="42.500" fontSize="9.500" fontWeight="700" textAnchor="middle" fill="#6f9fce" stroke="#f4f4f4" strokeWidth="2" paintOrder="stroke" fontFamily="Liberation Sans, sans-serif">2D</text>
        <path d="M13 49H18L15.500 52Z" fill="#888" stroke="none" /><path d="M3 55.500H29" stroke="#bdbdbd" />
        <path d="M8 64.500H18.500V75H8Z" fill="#b2d3a2" stroke="#86b27a" /><circle cx="18.500" cy="74.500" r="3.600" fill="#eee" stroke="#8b8f96" /><path d="M21 77L23.500 80" stroke="#8b8f96" strokeWidth="1.800" />
        <path d="M13 91.500H18L15.500 94.500Z" fill="#888" stroke="none" /><circle cx="26" cy="108" r="3.500" fill="#ccc" /><path d="M24 107.500H28" stroke="#f4f4f4" />
      </svg>
    </div>
  );
}

function ViewBar() {
  return (
    <div className="flex h-[17px] items-center bg-[#efefef] pl-[13px]">
      <span className="w-[68px] text-[12px] tracking-[-0.200px] text-[#111]">1/4" = 1'-0"</span>
      <div className="flex items-center gap-[5px] pb-[2px]">
        <Ic><path d="M0.700 2.500H15.300V13.500H0.700Z" fill="url(#dots)" /></Ic>
        <Ic><path d="M1 8L5 3H15V9L11 14H1Z" fill="#f2f2f2" /><path d="M1 8H11V14M11 8L15 3" /></Ic>
        <Ic><circle cx="7" cy="7" r="3.800" fill="#ffe68a" stroke="#d0a012" /><path d="M7 0V2M7 12V14M0 7H2M2 2L3.500 3.500M12 2L10.500 3.500M2 12L3.500 10.500" stroke="#d08a12" /><RedX x={9} y={8} s={5} /></Ic>
        <Ic><circle cx="7" cy="6" r="4.800" fill="#cfe6fa" stroke={B} /><path d="M1 13.500H9" strokeWidth="2.200" /><RedX x={9.500} y={9} s={5} /></Ic>
        <Ic><path d="M4.500 14V4.500H16M7.500 14V7.500H16" stroke={B} strokeWidth="1.400" /><path d="M0 12H8M9.500 9.500V12H15" /><path d="M10 10H14" stroke="#d0141c" strokeWidth="1.800" /></Ic>
        <Ic><path d="M4.500 14V4.500H12M7.500 14V7.500H10" stroke={B} strokeWidth="1.400" /><path d="M0 12H10" /><path d="M8 10H10" stroke="#d0141c" strokeWidth="1.800" /><circle cx="12.500" cy="6" r="2.800" fill="#ffe0a0" stroke="#f08a12" /><path d="M12.500 10V14" strokeWidth="2" /></Ic>
        <Ic><path d="M1 5L3 10.500Q5 13 7.500 10L8 8.500Q11 11.500 13.500 8.500L15 4L11 2M1 5L3 7.500H7.500V10M8 8.500V6H12.500L15 4" strokeWidth="1" /></Ic>
        <Ic><circle cx="8" cy="6" r="2.500" fill="#d6ecff" stroke="#1e78d2" /><path d="M8 9V12.500" strokeWidth="2" stroke="#6b7282" /></Ic>
        <Ic><path d="M2 4H12V12H2ZM2 1.500V4M5 1.500V4M8 1.500V4M11 1.500V4M0 7H2M0 10H2" /><path d="M9 8H15V14H9Z" fill="#eee" strokeDasharray="2 1" /><circle cx="12" cy="11" r="1" /></Ic>
        <Ic><path d="M1 7L5 3H13M1 7H10V13M3.500 5V13M6.500 3V13M9.500 3V13" strokeWidth="1" /><path d="M2 14V9M5 14V9M8 14V9" stroke="#d0141c" /><circle cx="12.500" cy="6" r="2.800" fill="#ffe0a0" stroke="#f08a12" /><path d="M12.500 10V14" strokeWidth="2" /></Ic>
        <Ic><path d="M0.700 1V6M15.300 1V6M1 3.500H15M3 2.500V4.500M13 2.500V4.500" strokeWidth="1" /><path d="M1 7V12H9" strokeDasharray="1.500 1.500" /><path d="M9.500 9H15V14H9.500Z" fill="#8a8f99" /><path d="M10.500 9V7H14V9" /></Ic>
      </div>
    </div>
  );
}

function Canvas() {
  return (
    <div className="flex w-[995px] shrink-0 flex-col border-l-2 border-[#cbcbcb] bg-white">
      <div className="flex h-[20px] shrink-0 items-center bg-[#cbcbcb]">
        <div className="flex h-full w-[242px] items-center bg-white pl-[5px]">
          <PlanIcon s={17} />
          <span className="ml-[6px] w-[194px] pt-px font-bold tracking-[-0.320px] text-[#3a3a3a]">Hazen Williams Darcy Weisbach...</span>
          <div className="ml-[5px]"><Cross /></div>
        </div>
        <div className="flex flex-1 justify-end pr-[4px]">
          <svg width="9" height="7" viewBox="0 0 9 7"><path d="M0.500 0.700H8.500M1 3H8L4.500 6.800Z" fill="#222" stroke="#222" strokeWidth="1" /></svg>
        </div>
      </div>
      <div className="flex h-[796px] shrink-0">
        <div className="relative w-[977px] shrink-0 overflow-hidden bg-white">
          <Drawing />
          <Dialog />
          <NavBar />
        </div>
        <div className="mt-[2px] flex flex-1 justify-center bg-[#efefef]">
          <div className="mt-[389px] h-[17px] w-[2px] bg-[#868686]" />
        </div>
      </div>
      <div className="flex h-[17px] shrink-0 bg-[#efefef]">
        <ViewBar />
        <div className="ml-[327px] mt-[8px] h-[2px] w-[17px] bg-[#868686]" />
        <div className="flex flex-1 items-end justify-end pb-[2px] pr-[3px]">
          <svg width="8" height="8" viewBox="0 0 8 8" fill="#b5b5b5"><path d="M6 0H8V2H6ZM3 3H5V5H3ZM6 3H8V5H6ZM0 6H2V8H0ZM3 6H5V8H3ZM6 6H8V8H6Z" /></svg>
        </div>
      </div>
    </div>
  );
}

/* ---------- project browser ---------- */

type Row = { d: number; t: string; k: "+" | "-" | ""; icon?: "views" | "legend" | "sched" | "sheet" | "family" | "view"; b?: boolean };

const v = (t: string, b = false): Row => ({ d: 4, t, k: "", icon: "view", b });
const p = (d: number, t: string): Row => ({ d, t, k: "+" });
const m = (d: number, t: string): Row => ({ d, t, k: "-" });

const rows: Row[] = [
  { d: 0, t: "Views (Discipline)", k: "-", icon: "views" },
  p(1, "Coordination"),
  p(1, "Mechanical"),
  m(1, "Plumbing"),
  m(2, "Fire Protection"),
  m(3, "Floor Plans"),
  v("1 - FP"),
  v("2 - FP"),
  m(3, "Ceiling Plans"),
  v("1 - Ceiling FP"),
  v("1 - Dry Canopy"),
  v("2 - Ceiling FP"),
  v("Hazen Williams Darcy Weisbach Manual", true),
  p(3, "3D Views"),
  m(3, "Elevations (Building Elevation)"),
  v("East - Plumbing"),
  v("North - Plumbing"),
  v("South - Plumbing"),
  v("West - Plumbing"),
  m(3, "Sections (Building Section)"),
  v("Dry Valve Elevation"),
  v("Standpipe Elevation"),
  { d: 0, t: "Legends", k: "+", icon: "legend" },
  { d: 0, t: "Schedules/Quantities (all)", k: "+", icon: "sched" },
  { d: 0, t: "Sheets (all)", k: "", icon: "sheet" },
  { d: 0, t: "Families", k: "-", icon: "family" },
  p(1, "Air Terminals"),
  p(1, "Analytical Links"),
  m(1, "Annotation Symbols"),
  ...[
    "Area Tag", "Automatic Up/Down Direction", "Cable Tray Size Tag", "Callout Head", "Ceiling Tag w Height", "Centerline",
    "Circle", "Circle Filled", "Circle Small", "Circle Small Filled", "Conduit Size Tag", "Diamond", "Diamond Filled",
    "Diamond Small", "Diamond Small Filled", "Diffuser Tag",
  ].map((t) => p(2, t)),
];

function continues(i: number, level: number) {
  for (let j = i + 1; j < rows.length; j++) {
    if (rows[j].d < level) return false;
    if (rows[j].d === level) return true;
  }
  return level < 3;
}

const treeIcons = {
  views: <Ic><path d="M1 4V1H4M12 1H15V4M15 12V15H12M4 15H1V12" strokeWidth="1.100" /><path d="M4.500 6.500L6.500 4.500H12V9.500L10 12H4.500Z" fill="#eee" strokeWidth="1" /></Ic>,
  legend: <Ic><path d="M0.700 0.700H15.300V15.300H0.700Z" fill="#eee" /><path d="M0.700 2.500H15.300" strokeWidth="3" /><path d="M3 6H6V8.500H3ZM3 11H6V13H3Z" fill={D} /><path d="M8 7H14M8 9H12M8 12H14" strokeDasharray="3 1" strokeWidth="1" /></Ic>,
  sched: <Ic><path d="M0.700 2.500H14.500V13.500H0.700Z" fill="#eee" /><path d="M0.700 3.700H14.500" strokeWidth="2.400" /><path d="M1 8H14M1 11H14M5 5V14M8 5V14" stroke="#8a8f99" strokeWidth="1" /></Ic>,
  sheet: <Ic><path d="M0.700 2H11L15.300 6V14H0.700Z" fill="#eee" /><path d="M3 5H9V12H3ZM5 12V9H8M11 2V6H15M11.500 8V13" stroke="#6b7282" strokeWidth="1.100" /></Ic>,
  family: <Ic><path d="M1.500 1.500H8V7.500H1.500ZM10 1.500H14.500V14.500H1.500V10H10Z" fill="#f2f2f2" /></Ic>,
  view: (
    <svg width="16" height="16" viewBox="0 0 16 16" fill="none" stroke="#5a5f6b" shapeRendering="crispEdges">
      <rect x="0.500" y="0.500" width="15" height="15" strokeDasharray="4 1" /><rect x="2.500" y="2.500" width="11" height="11" fill="#f4f4f4" />
    </svg>
  ),
};

function Tree() {
  return (
    <div className="h-[798px] w-[425px] shrink-0 overflow-hidden bg-white text-[#0f0f14]">
      {rows.map((r, i) => (
        <div key={i} className="flex h-[18px] items-center whitespace-nowrap">
          {Array.from({ length: r.d + 1 }, (_, l) => {
            const own = l === r.d;
            const cont = continues(i, l);
            return (
              <svg key={l} width="20" height="18" viewBox="0 0 20 18" className="shrink-0 overflow-visible" fill="none" stroke="#8f8f8f" strokeWidth="1" shapeRendering="crispEdges">
                {own && i > 0 && <path d="M8.500 0V10" strokeDasharray="1 1" />}
                {cont && <path d={own ? "M8.500 10V18" : "M8.500 0V18"} strokeDasharray="1 1" />}
                {own && <path d={r.icon ? "M9 10.500H19" : "M9 10.500H23"} strokeDasharray="1 1" />}
                {own && r.k && (
                  <>
                    <rect x="4.500" y="6.500" width="8" height="8" fill="#f6f6f6" stroke="#8c8c8c" />
                    <path d={r.k === "+" ? "M6 10.500H11M8.500 8V13" : "M6 10.500H11"} stroke="#2b4a9b" />
                  </>
                )}
              </svg>
            );
          })}
          {r.icon && treeIcons[r.icon]}
          <span className={`${i === 0 ? "ml-[3px] bg-[#e2e2e2] px-[3px]" : "ml-[6px]"} leading-[18px] ${r.b ? "font-bold tracking-[-0.430px]" : "tracking-[-0.290px]"}`}>{r.t}</span>
        </div>
      ))}
    </div>
  );
}

function Browser() {
  return (
    <div className="flex flex-1 flex-col bg-[#efefef] pl-[2px]">
      <div className="flex h-[20px] shrink-0 items-center justify-between pl-[2px] pr-[3px] pt-[2px] text-[#3c3c3c]">
        <span>Project Browser - R23 Manual Darcy Weisbach Calculation.rvt</span>
        <Cross />
      </div>
      <div className="flex">
        <Tree />
        <div className="ml-[7px] mt-[17px] h-[198px] w-[2px] bg-[#868686]" />
      </div>
      <div className="ml-[17px] mt-[7px] h-[2px] w-[338px] bg-[#868686]" />
    </div>
  );
}

/* ---------- status bar ---------- */

function Combo({ text }: { text?: string }) {
  return (
    <div className="flex h-[18px] w-[204px] items-center bg-white text-[#8a8a8a]">
      <span className="h-full flex-1 border-r border-[#efefef] pl-[3px] leading-[18px]">{text}</span>
      <span className="flex w-[15px] justify-center"><Chevron color="#b5b5b5" /></span>
    </div>
  );
}

function StatusBar() {
  return (
    <div className="flex h-[24px] shrink-0 items-center bg-[#cbcbcb] pt-[2px] text-[#222]">
      <span className="w-[895px] pl-px">Ready</span>
      <Ic s={18}><path d="M1.500 9L4 7H9V16H1.500Z" fill="#cfe6fa" stroke={B} /><path d="M5 5L8 1.500H12L14 4V8L10 9V6H5Z" fill="#c4e6b8" stroke="#1f7a2a" /><path d="M12.500 8H15.500V11.500L14.800 12V17H13.200V12L12.500 11.500Z" fill="#fff" /></Ic>
      <div className="ml-[7px]"><Combo /></div>
      <div className="ml-[8px]"><Ic><path d="M5 1H14V5L12 8L9 6.500H6ZM8 8L4 12M2 15H9V12H4L2 15Z" fill="#ddd" strokeWidth="1" /></Ic></div>
      <span className="ml-[5px] w-[33px]">:0</span>
      <Ic><path d="M0.700 0.700H15.300V15.300H0.700Z" fill="#eee" /><path d="M0.700 2H15.300" strokeWidth="2.400" /><path d="M3 7H5.500M4 7V13H7M7.500 7H13M8 10H13M8 13H13" strokeWidth="1" /></Ic>
      <div className="ml-[9px]"><Ic><path d="M2 0.700H15.300V13H2Z" fill="#eee" /><path d="M2 2H15.300" strokeWidth="2.400" /><path d="M4 7H6M8 7H13M9 10H13" strokeWidth="1" /><path d="M0 12H9M6 9L9 12L6 15" stroke="#1e78d2" strokeWidth="1.800" /></Ic></div>
      <div className="ml-[9px]"><Combo text="Main Model" /></div>
      <div className="ml-[227px] flex items-center gap-[8px]">
        <Ic s={18}><rect x="1" y="2.500" width="8" height="4.500" rx="2.200" stroke="#d49a10" strokeWidth="1.600" /><rect x="8" y="2.500" width="8" height="4.500" rx="2.200" stroke="#d49a10" strokeWidth="1.600" /><Cursor x={8} y={6} /></Ic>
        <Ic s={18}><path d="M1 9L10 1.500V9ZM1 12H10M1 15H10" fill="#dceefb" stroke={B} /><RedX x={11} y={1.500} s={5} /><Cursor x={10} y={6} /></Ic>
        <Ic s={18}><path d="M3 2H11V4H10V7L12 9.500H2L4 7V4H3ZM7 10V16" fill="#f6b48c" stroke="#c05a20" /><Cursor x={10} y={6} /></Ic>
        <Ic s={18}><path d="M2 4L8 2V14L2 16Z" fill="#a8d4f5" stroke={B} /><path d="M8 2H11V13H8" fill="#dceefb" stroke={B} /><RedX x={11} y={1.500} s={5} /><Cursor x={10} y={6} /></Ic>
        <Ic s={18}><path d="M5.500 1V11M0.500 6H10.500M4 2.500L5.500 1L7 2.500M4 9.500L5.500 11L7 9.500M2 4.500L0.500 6L2 7.500M9 4.500L10.500 6L9 7.500" stroke="#222" strokeWidth="1" /><Cursor x={10} y={6} /></Ic>
        <Ic s={18}><circle cx="8.500" cy="8.500" r="5.500" stroke="#a2a2a2" strokeWidth="3.200" strokeDasharray="3.400 0.900" /></Ic>
        <Ic><path d="M1 1.500H15V3.500L10 8.500V14L6.500 15.500V8.500L1 3.500Z" fill="#9aa0ac" /><path d="M3 3H13" stroke="#e8e8e8" /></Ic>
      </div>
      <span className="ml-[2px]">:0</span>
    </div>
  );
}

export default function App() {
  return (
    <div className="flex h-[1032px] w-[1920px] flex-col overflow-hidden bg-[#eeeeee] font-['Open_Sans','Noto_Sans',sans-serif] text-[12px] tracking-[-0.3px]">
      <Defs />
      <TitleBar />
      <Tabs />
      <Ribbon />
      <div className="h-[26px] shrink-0" />
      <div className="h-[2px] shrink-0 bg-[#cbcbcb]" />
      <div className="flex h-[835px] shrink-0">
        <Properties />
        <Canvas />
        <div className="w-[4px] shrink-0 border-l-2 border-white bg-[#cbcbcb]" />
        <Browser />
      </div>
      <StatusBar />
    </div>
  );
}
